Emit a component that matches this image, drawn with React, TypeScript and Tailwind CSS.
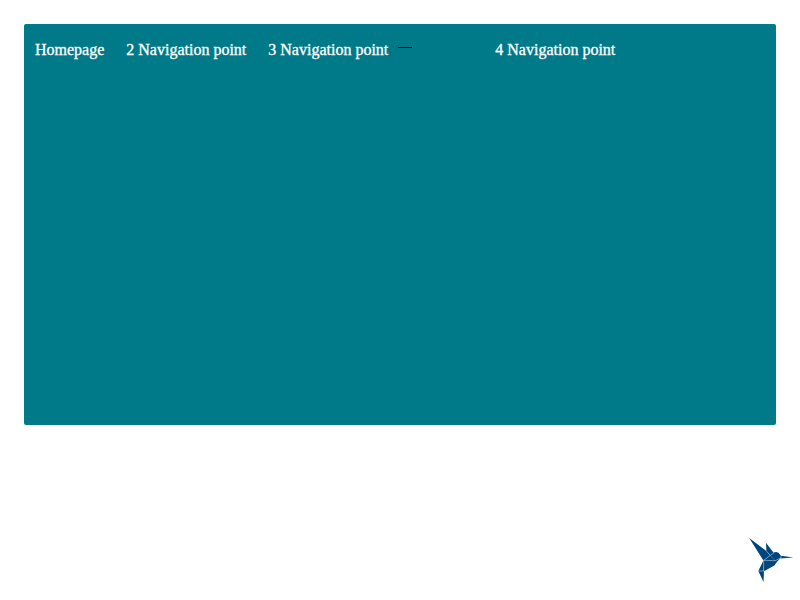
const linkClass = "block px-[11px] text-white [-webkit-text-stroke:0.3px_white]";

function Hummingbird() {
  return (
    <svg
      className="fixed right-0 bottom-0 h-[70px] w-[60px]"
      viewBox="740 530 60 70"
      role="img"
      aria-label="Hummingbird"
    >
      <path
        fill="#00457c"
        d="M749.2 538 L766.4 551 L766 542.8 L773.4 552.6 L776.2 552 L778.5 552.8 L781 555.7 L793.3 557.5 L780.2 558.6 L777.2 561.6 L774.4 565.4 L764 571.2 L763.5 582 L758.3 571 L763.4 560.4 Z"
      />
      <g fill="none" stroke="#ffffff" strokeWidth="0.6" strokeOpacity="0.75">
        <path d="M766.2 550.8 L770.2 555.4 L774 552.6" />
        <path d="M770.2 555.4 L763.8 560.3 L775.2 560.7 L780.6 557.9" />
        <path d="M770.2 555.4 L775.2 560.7" strokeOpacity="0.35" />
        <path d="M763.6 560.3 V571 M758.3 571 H764.2" />
        <path d="M781 555.2 V558.8" />
      </g>
    </svg>
  );
}

export default function App() {
  return (
    <div className="min-h-screen bg-white p-6 font-['Liberation_Serif',serif] text-base">
      <header className="h-[401px] rounded-[2px] bg-[#007a88]">
        <nav className="pt-[14px]">
          <ul className="flex leading-6">
            <li><a href="#" className={linkClass}>Homepage</a></li>
            <li><a href="#" className={linkClass}>2 Navigation point</a></li>
            <li className="flex w-[227px] items-start">
              <a href="#" className={linkClass}>3 Navigation point</a>
              <span className="mt-[9px] -ml-px h-px w-[14px] bg-black" />
            </li>
            <li><a href="#" className={linkClass}>4 Navigation point</a></li>
          </ul>
        </nav>
      </header>
      <Hummingbird />
    </div>
  );
}
